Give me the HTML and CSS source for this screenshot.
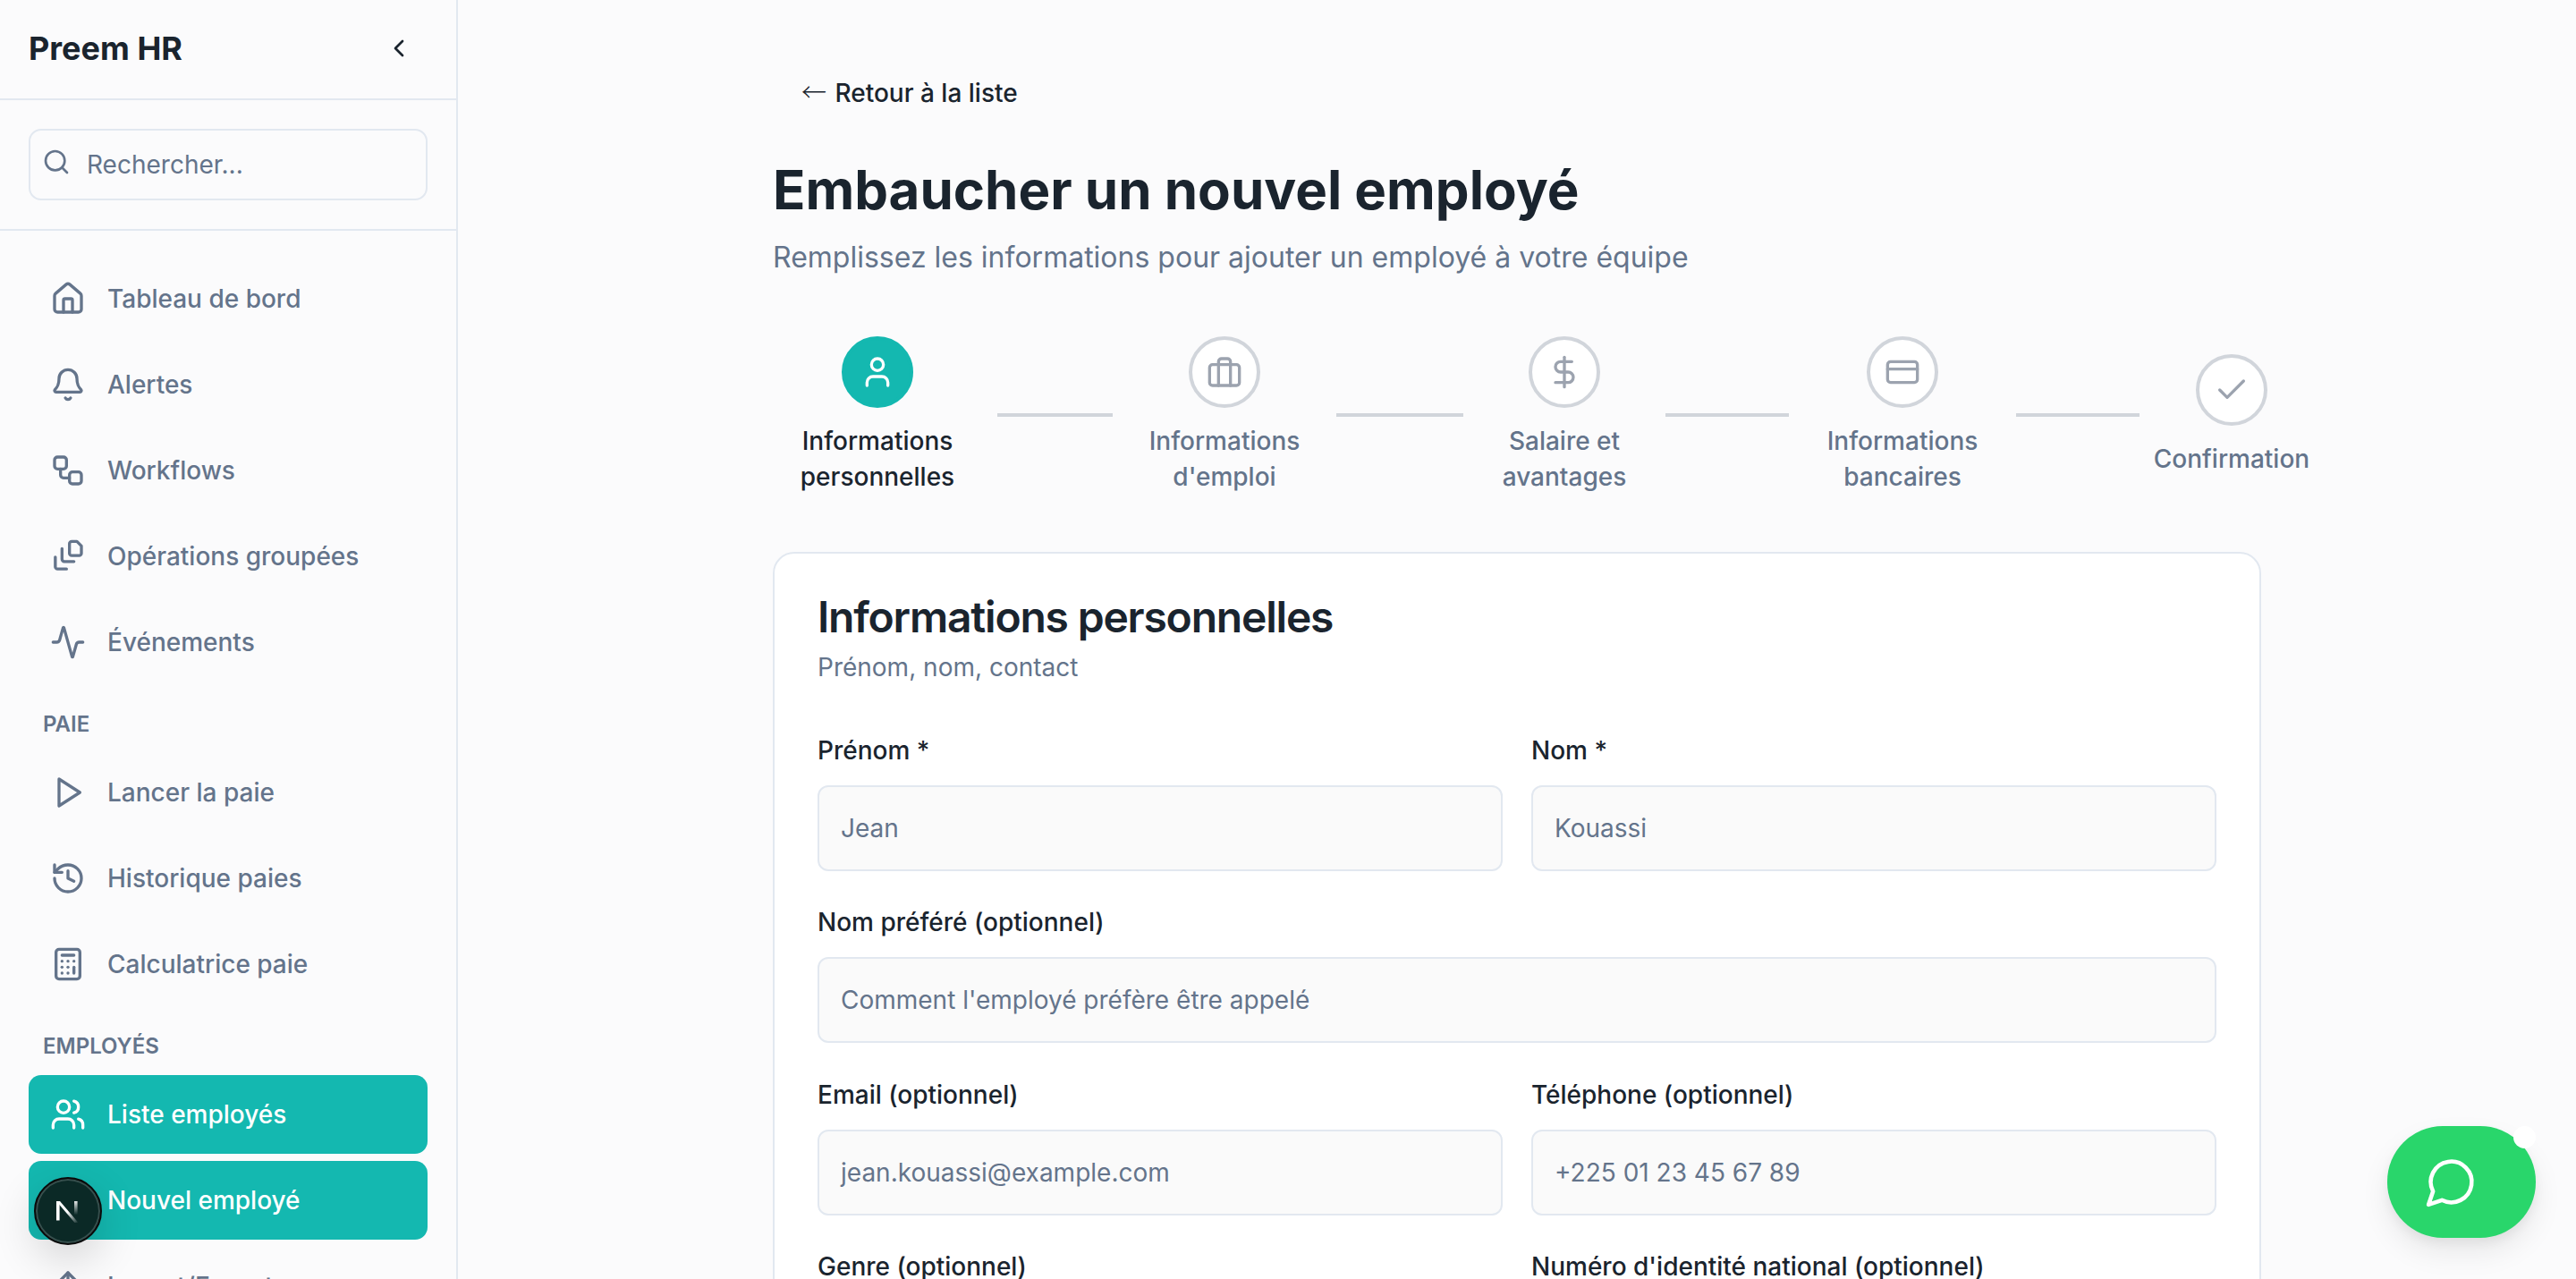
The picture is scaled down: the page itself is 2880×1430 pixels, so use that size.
FILE: index.html
```html
<!DOCTYPE html>
<html lang="fr">
<head>
<meta charset="utf-8">
<title>Preem HR</title>
<link rel="stylesheet" href="styles.css">
</head>
<body>
<aside class="sidebar">
  <div class="brand">
    <span class="brand-name">Preem HR</span>
    <svg class="icon collapse" viewBox="0 0 24 24"><path d="m15 18-6-6 6-6"/></svg>
  </div>
  <div class="search-wrap">
    <div class="search">
      <svg class="icon search-icon" viewBox="0 0 24 24"><circle cx="11" cy="11" r="8"/><path d="m21 21-4.3-4.3"/></svg>
      <span>Rechercher...</span>
    </div>
  </div>
  <nav class="nav">
    <a class="nav-item"><svg class="icon" viewBox="0 0 24 24"><path d="M15 21v-8a1 1 0 0 0-1-1h-4a1 1 0 0 0-1 1v8"/><path d="M3 10a2 2 0 0 1 .709-1.528l7-5.999a2 2 0 0 1 2.582 0l7 5.999A2 2 0 0 1 21 10v9a2 2 0 0 1-2 2H5a2 2 0 0 1-2-2z"/></svg>Tableau de bord</a>
    <a class="nav-item"><svg class="icon" viewBox="0 0 24 24"><path d="M10.268 21a2 2 0 0 0 3.464 0"/><path d="M3.262 15.326A1 1 0 0 0 4 17h16a1 1 0 0 0 .74-1.673C19.41 13.956 18 12.499 18 8A6 6 0 0 0 6 8c0 4.499-1.411 5.956-2.738 7.326"/></svg>Alertes</a>
    <a class="nav-item"><svg class="icon" viewBox="0 0 24 24"><rect width="8" height="8" x="3" y="3" rx="2"/><path d="M7 11v4a2 2 0 0 0 2 2h4"/><rect width="8" height="8" x="13" y="13" rx="2"/></svg>Workflows</a>
    <a class="nav-item"><svg class="icon" viewBox="0 0 24 24"><path d="M14.5 2H18l3 3v5a1.5 1.5 0 0 1-1.500 1.500h-5A1.500 1.500 0 0 1 13 10V3.500A1.500 1.500 0 0 1 14.500 2Z"/><path d="M8 6.800V14a1.500 1.500 0 0 0 1.500 1.500H16"/><path d="M3.500 12.500V19a1.500 1.500 0 0 0 1.500 1.500h6"/></svg>Opérations groupées</a>
    <a class="nav-item"><svg class="icon" viewBox="0 0 24 24"><path d="M22 12h-2.480a2 2 0 0 0-1.930 1.460l-2.350 8.360a.25.25 0 0 1-.48 0L9.240 2.180a.25.25 0 0 0-.48 0l-2.350 8.360A2 2 0 0 1 4.490 12H2"/></svg>Événements</a>
    <div class="nav-label">PAIE</div>
    <a class="nav-item"><svg class="icon" viewBox="0 0 24 24"><polygon points="6 3 20 12 6 21 6 3"/></svg>Lancer la paie</a>
    <a class="nav-item"><svg class="icon" viewBox="0 0 24 24"><path d="M3 12a9 9 0 1 0 9-9 9.750 9.750 0 0 0-6.740 2.740L3 8"/><path d="M3 3v5h5"/><path d="M12 7v5l4 2"/></svg>Historique paies</a>
    <a class="nav-item"><svg class="icon" viewBox="0 0 24 24"><rect width="16" height="20" x="4" y="2" rx="2"/><line x1="8" x2="16" y1="6" y2="6"/><line x1="16" x2="16" y1="14" y2="18"/><path d="M16 10h.01"/><path d="M12 10h.01"/><path d="M8 10h.01"/><path d="M12 14h.01"/><path d="M8 14h.01"/><path d="M12 18h.01"/><path d="M8 18h.01"/></svg>Calculatrice paie</a>
    <div class="nav-label">EMPLOYÉS</div>
    <a class="nav-item active"><svg class="icon" viewBox="0 0 24 24"><path d="M16 21v-2a4 4 0 0 0-4-4H6a4 4 0 0 0-4 4v2"/><circle cx="9" cy="7" r="4"/><path d="M22 21v-2a4 4 0 0 0-3-3.870"/><path d="M16 3.130a4 4 0 0 1 0 7.750"/></svg>Liste employés</a>
    <a class="nav-item active"><svg class="icon" viewBox="0 0 24 24"><path d="M16 21v-2a4 4 0 0 0-4-4H6a4 4 0 0 0-4 4v2"/><circle cx="9" cy="7" r="4"/></svg>Nouvel employé</a>
    <a class="nav-item"><svg class="icon" viewBox="0 0 24 24"><path d="M21 15v4a2 2 0 0 1-2 2H5a2 2 0 0 1-2-2v-4"/><polyline points="17 8 12 3 7 8"/><line x1="12" x2="12" y1="3" y2="15"/></svg>Import/Export</a>
  </nav>
</aside>

<main class="main">
  <div class="content">
    <a class="back"><span class="back-arrow">←</span> Retour à la liste</a>
    <h1 class="title">Embaucher un nouvel employé</h1>
    <p class="subtitle">Remplissez les informations pour ajouter un employé à votre équipe</p>

    <div class="stepper">
      <div class="step step-1 current">
        <span class="dot"><svg class="icon" viewBox="0 0 24 24"><path d="M19 21v-2a4 4 0 0 0-4-4H9a4 4 0 0 0-4 4v2"/><circle cx="12" cy="7" r="4"/></svg></span>
        <span class="step-label">Informations personnelles</span>
      </div>
      <span class="connector conn-1"></span>
      <div class="step step-2">
        <span class="dot"><svg class="icon" viewBox="0 0 24 24"><path d="M16 21V5a2 2 0 0 0-2-2h-4a2 2 0 0 0-2 2v16"/><rect width="20" height="14" x="2" y="7" rx="2"/></svg></span>
        <span class="step-label">Informations d'emploi</span>
      </div>
      <span class="connector conn-2"></span>
      <div class="step step-3">
        <span class="dot"><svg class="icon" viewBox="0 0 24 24"><line x1="12" x2="12" y1="2" y2="22"/><path d="M17 5H9.500a3.500 3.500 0 0 0 0 7h5a3.500 3.500 0 0 1 0 7H6"/></svg></span>
        <span class="step-label">Salaire et avantages</span>
      </div>
      <span class="connector conn-3"></span>
      <div class="step step-4">
        <span class="dot"><svg class="icon" viewBox="0 0 24 24"><rect width="20" height="14" x="2" y="5" rx="2"/><line x1="2" x2="22" y1="10" y2="10"/></svg></span>
        <span class="step-label">Informations bancaires</span>
      </div>
      <span class="connector conn-4"></span>
      <div class="step step-5">
        <span class="dot"><svg class="icon" viewBox="0 0 24 24"><path d="M20 6 9 17l-5-5"/></svg></span>
        <span class="step-label">Confirmation</span>
      </div>
    </div>

    <section class="card">
      <h2 class="card-title">Informations personnelles</h2>
      <p class="card-sub">Prénom, nom, contact</p>
      <div class="form">
        <div class="field"><label class="label">Prénom *</label><div class="input">Jean</div></div>
        <div class="field"><label class="label">Nom *</label><div class="input">Kouassi</div></div>
        <div class="field wide"><label class="label">Nom préféré (optionnel)</label><div class="input">Comment l'employé préfère être appelé</div></div>
        <div class="field"><label class="label">Email (optionnel)</label><div class="input">jean.kouassi@example.com</div></div>
        <div class="field"><label class="label">Téléphone (optionnel)</label><div class="input">+225 01 23 45 67 89</div></div>
        <div class="field"><label class="label">Genre (optionnel)</label><div class="input"></div></div>
        <div class="field"><label class="label">Numéro d'identité national (optionnel)</label><div class="input"></div></div>
      </div>
    </section>
  </div>
</main>

<button class="dev-badge" aria-label="Next.js">
  <svg class="dev-logo" viewBox="0 0 28 28">
    <defs>
      <linearGradient id="diag" gradientUnits="userSpaceOnUse" x1="1" y1="3" x2="25" y2="28"><stop offset="0.5" stop-color="#fff"/><stop offset="1" stop-color="#fff" stop-opacity="0"/></linearGradient>
      <linearGradient id="bar" x1="0" y1="0" x2="0" y2="1"><stop offset="0" stop-color="#fff" stop-opacity="0.9"/><stop offset="0.9" stop-color="#fff" stop-opacity="0"/></linearGradient>
    </defs>
    <rect x="1" y="3" width="3.600" height="21.500" fill="#fff"/>
    <polygon points="1,3 5,3 25.500,27 21.500,27" fill="url(#diag)"/>
    <rect x="21" y="3" width="3.600" height="17" fill="url(#bar)"/>
  </svg>
</button>

<button class="chat" aria-label="Chat">
  <svg class="icon chat-icon" viewBox="0 0 24 24"><path d="M7.900 20A9 9 0 1 0 4 16.100L2 22Z"/></svg>
  <span class="chat-dot"></span>
</button>
</body>
</html>
```
FILE: styles.css
```css
* { box-sizing: border-box; }
html, body { height: 100%; }
body {
  margin: 0;
  display: flex;
  height: 100vh;
  overflow: hidden;
  background: #fbfbfc;
  color: #1a242e;
  font-family: Inter, "Liberation Sans", sans-serif;
}
.icon {
  width: 40px;
  height: 40px;
  flex: none;
  fill: none;
  stroke: currentColor;
  stroke-width: 2;
  stroke-linecap: round;
  stroke-linejoin: round;
}

/* Sidebar */
.sidebar {
  width: 512px;
  flex: none;
  height: 100%;
  overflow: hidden;
  border-right: 2px solid #e2e8f0;
  background: #fbfbfc;
}
.brand {
  height: 112px;
  padding: 0 48px 2px 32px;
  display: flex;
  align-items: center;
  justify-content: space-between;
  border-bottom: 2px solid #e2e8f0;
}
.brand-name { font-size: 36px; line-height: 56px; font-weight: 700; }
.collapse { width: 32px; height: 32px; }
.search-wrap { padding: 32px; border-bottom: 2px solid #e2e8f0; }
.search {
  height: 80px;
  display: flex;
  align-items: center;
  gap: 18px;
  padding: 0 13px;
  border: 2px solid #e2e8f0;
  border-radius: 14px;
  color: #64748b;
  font-size: 28px;
}
.search-icon { width: 32px; height: 32px; margin-top: -6px; }
.nav {
  padding: 32px 32px 0;
  display: flex;
  flex-direction: column;
  gap: 8px;
}
.nav-item {
  height: 88px;
  flex: none;
  display: flex;
  align-items: center;
  gap: 24px;
  padding: 0 24px;
  border-radius: 14px;
  color: #64748b;
  font-size: 28px;
  font-weight: 500;
}
.nav-item.active { background: #14b8b0; color: #fff; }
.nav-label {
  margin: 24px 0 8px;
  padding-left: 16px;
  font-size: 24px;
  line-height: 32px;
  font-weight: 600;
  color: #64748b;
}

/* Main */
.main { flex: 1; min-width: 0; padding-top: 64px; }
.content { width: 1664px; margin: 0 auto; }
.back {
  display: block;
  width: fit-content;
  height: 80px;
  padding: 0 32px;
  line-height: 80px;
  font-size: 28px;
  font-weight: 500;
}
.back-arrow {
  font-family: "Noto Sans CJK SC", "Liberation Sans", sans-serif;
  font-weight: 300;
  line-height: 0;
  margin-right: 2px;
}
.title {
  margin: 32px 0 0;
  font-size: 60px;
  line-height: 72px;
  font-weight: 700;
}
.subtitle {
  margin: 16px 0 0;
  font-size: 32px;
  line-height: 48px;
  color: #64748b;
}

/* Stepper */
.stepper {
  margin-top: 64px;
  display: flex;
  align-items: center;
  gap: 16px;
  width: max-content;
}
.step {
  flex: none;
  display: flex;
  flex-direction: column;
  align-items: center;
  gap: 17px;
  text-align: center;
}
.step-1 { width: 235px; padding-right: 1px; }
.step-2 { width: 218px; }
.step-3 { width: 194px; }
.step-4 { width: 222px; }
.step-5 { width: 174px; }
.dot {
  width: 80px;
  height: 80px;
  display: flex;
  align-items: center;
  justify-content: center;
  border: 4px solid #d1d5db;
  border-radius: 50%;
  background: #fff;
  color: #9ca3af;
}
.current .dot { background: #14b8b0; border-color: #14b8b0; color: #fff; }
.step-label {
  font-size: 28px;
  line-height: 40px;
  font-weight: 500;
  color: #64748b;
}
.current .step-label { color: #1a242e; }
.connector { height: 4px; flex: none; margin-top: -1px; background: #d1d5db; }
.conn-1 { width: 129px; }
.conn-2 { width: 142px; }
.conn-3 { width: 138px; }
.conn-4 { width: 138px; }

/* Card */
.card {
  margin-top: 64px;
  padding: 43px 48px 48px;
  background: #fff;
  border: 2px solid #e2e8f0;
  border-radius: 24px;
}
.card-title {
  margin: 0;
  font-size: 48px;
  line-height: 56px;
  font-weight: 600;
  letter-spacing: -1.2px;
}
.card-sub {
  margin: 8px 0 0;
  font-size: 28px;
  line-height: 40px;
  color: #64748b;
}
.form {
  margin-top: 53px;
  display: grid;
  grid-template-columns: 1fr 1fr;
  column-gap: 32px;
  row-gap: 37.4px;
}
.wide { grid-column: 1 / -1; }
.field { display: flex; flex-direction: column; gap: 19px; }
.label { font-size: 28px; line-height: 40px; font-weight: 500; }
.input {
  height: 96px;
  display: flex;
  align-items: center;
  padding: 0 24px;
  background: #fafafa;
  border: 2px solid #e2e8f0;
  border-radius: 12px;
  font-size: 28px;
  color: #64748b;
}

/* Floating */
.dev-badge {
  position: absolute;
  left: 38px;
  top: 1316px;
  width: 76px;
  height: 76px;
  padding: 0;
  display: flex;
  align-items: center;
  justify-content: center;
  border: 2px solid #0a0a0a;
  border-radius: 50%;
  background: #0b2926;
  box-shadow: inset 0 0 0 2px rgba(255,255,255,.18), 0 16px 48px rgba(0,0,0,.16);
}
.dev-logo { width: 28px; height: 28px; }
.chat {
  position: absolute;
  left: 2669px;
  top: 1259px;
  width: 166px;
  height: 125px;
  padding: 0 0 0 41px;
  display: flex;
  align-items: center;
  border: 0;
  border-radius: 62px;
  background: #29d66b;
  color: #fff;
  box-shadow: 0 16px 32px rgba(0,0,0,.08), 0 6px 12px rgba(0,0,0,.05);
}
.chat-icon { width: 61px; height: 61px; stroke-width: 1.8; }
.chat-dot {
  position: absolute;
  right: 0;
  top: 0;
  width: 25px;
  height: 25px;
  border-radius: 50%;
  background: #fff;
}
```
